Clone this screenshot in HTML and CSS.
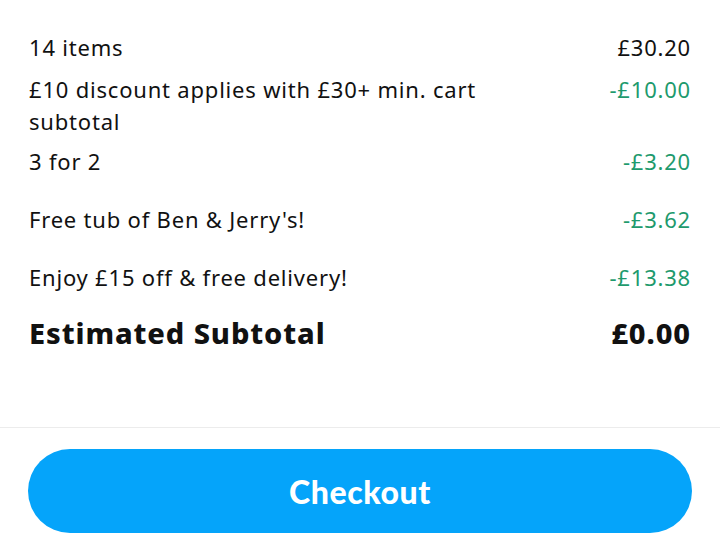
FILE: index.html
```html
<!DOCTYPE html>
<html lang="en">
<head>
<meta charset="utf-8">
<link rel="stylesheet" href="styles.css">
</head>
<body>
<main class="summary">
  <div class="row row-first">
    <span class="label">14 items</span>
    <span class="amount">£30.20</span>
  </div>
  <div class="row row-second">
    <span class="label">£10 discount applies with £30+ min. cart subtotal</span>
    <span class="amount discount">-£10.00</span>
  </div>
  <div class="row row-third">
    <span class="label">3 for 2</span>
    <span class="amount discount">-£3.20</span>
  </div>
  <div class="row row-promo">
    <span class="label">Free tub of Ben &amp; Jerry's!</span>
    <span class="amount discount">-£3.62</span>
  </div>
  <div class="row row-promo">
    <span class="label">Enjoy £15 off &amp; free delivery!</span>
    <span class="amount discount">-£13.38</span>
  </div>
  <div class="row row-total">
    <span class="label">Estimated Subtotal</span>
    <span class="amount">£0.00</span>
  </div>
</main>
<footer class="footer">
  <button class="checkout">Checkout</button>
  <div class="shade"></div>
</footer>
</body>
</html>
```
FILE: styles.css
```css
* { box-sizing: border-box; }
html, body { margin: 0; padding: 0; background: #fff; }
body {
  width: 720px;
  height: 552px;
  overflow: hidden;
  font-family: "Noto Sans", "Open Sans", sans-serif;
  color: #111;
  display: flex;
  flex-direction: column;
}
.summary {
  padding: 31px 29px 0 29px;
  height: 428px;
  border-bottom: 1px solid #ececec;
}
.row {
  display: flex;
  justify-content: space-between;
  align-items: flex-start;
  font-size: 22px;
  line-height: 32px;
  letter-spacing: 0.8px;
}
.label { max-width: 480px; }
.amount { white-space: nowrap; text-align: right; }
.discount { color: #1e9a6d; }
.row-second { margin-top: 10px; }
.row-third { margin-top: 8px; }
.row-promo { margin-top: 26px; }
.row-total {
  margin-top: 20px;
  font-size: 29px;
  line-height: 40px;
  font-weight: 800;
  letter-spacing: 0.9px;
}
.footer {
  position: relative;
  flex: 1;
  padding: 21px 28px 0 28px;
}
.checkout {
  display: block;
  width: 100%;
  height: 84px;
  border: none;
  border-radius: 42px;
  background: #05a4fa;
  color: #fff;
  font-family: "Lato", sans-serif;
  font-weight: 900;
  font-size: 32px;
  letter-spacing: 0.6px;
}
.shade {
  position: absolute;
  left: 0; right: 0; bottom: 0;
  height: 12px;
  background: linear-gradient(#fff, #ececec);
  z-index: -1;
}
```
